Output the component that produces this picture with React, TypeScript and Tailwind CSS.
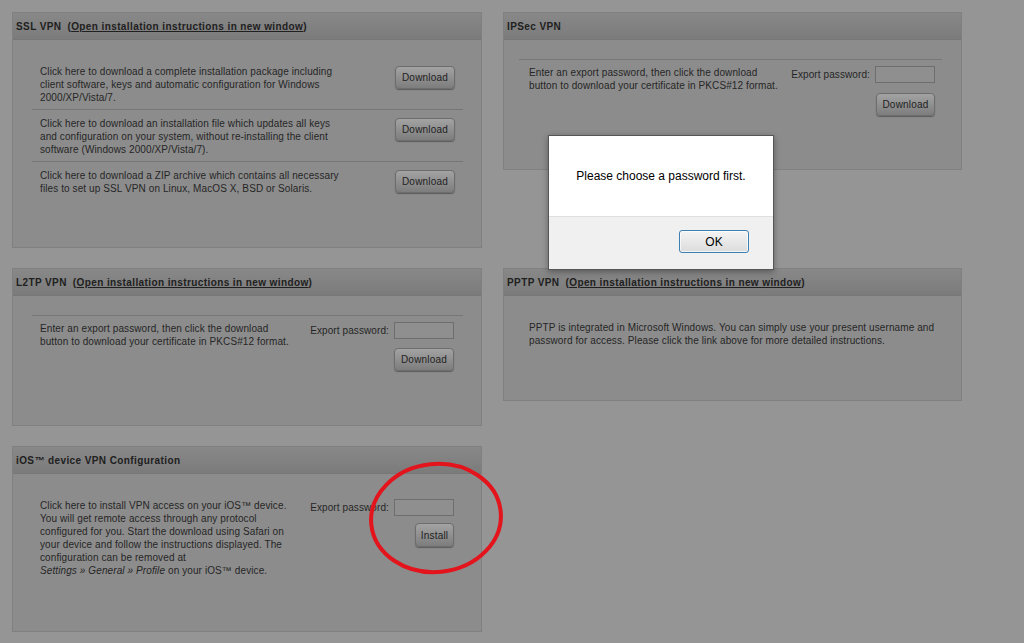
import React from 'react'

const FONT = "font-['Liberation_Sans',Arial,sans-serif]"

function Header({ title, link }: { title: string; link?: boolean }) {
  return (
    <div className="h-[27px] flex items-center pl-[3px] bg-linear-to-b from-[#888888] to-[#7b7b7b] border-b border-[#777777] text-[10px] font-bold text-[#202020] tracking-[0.4px] whitespace-nowrap">
      <span>{title}</span>
      {link && (
        <span className="ml-[6px]">
          (<span className="underline">Open installation instructions in new window</span>)
        </span>
      )}
    </div>
  )
}

function Btn({ label, w }: { label: string; w: string }) {
  return (
    <button
      className={`${w} h-[23px] rounded-[4px] border border-[#6d6d6d] bg-linear-to-b from-[#a3a3a3] to-[#7d7d7d] text-[10px] text-[#222222] shadow-[0_1px_1px_rgba(0,0,0,0.35)] tracking-[0.2px]`}
    >
      {label}
    </button>
  )
}

function Lines({ lines }: { lines: React.ReactNode[] }) {
  return (
    <div className="whitespace-nowrap">
      {lines.map((l, i) => (
        <div key={i} className="h-[13px] leading-[13px]">
          {l}
        </div>
      ))}
    </div>
  )
}

function PasswordField() {
  return (
    <div className="flex items-center gap-[5px]">
      <span>Export password:</span>
      <div className="w-[60px] h-[17px] border border-[#6e6e6e] bg-[#8f8f8f]" />
    </div>
  )
}

const sslRows = [
  [
    'Click here to download a complete installation package including',
    'client software, keys and automatic configuration for Windows',
    '2000/XP/Vista/7.',
  ],
  [
    'Click here to download an installation file which updates all keys',
    'and configuration on your system, without re-installing the client',
    'software (Windows 2000/XP/Vista/7).',
  ],
  [
    'Click here to download a ZIP archive which contains all necessary',
    'files to set up SSL VPN on Linux, MacOS X, BSD or Solaris.',
  ],
]

const certLines = [
  'Enter an export password, then click the download',
  'button to download your certificate in PKCS#12 format.',
]

export default function App() {
  return (
    <div
      className={`${FONT} relative w-[1024px] h-[643px] overflow-hidden bg-[#959595] text-[10px] text-[#262626] tracking-[0.1px] pt-[12px] pl-[12px] flex flex-col gap-[20px]`}
    >
      {/* row 1 */}
      <div className="flex items-start gap-[21px]">
        <div className="w-[470px] h-[236px] border border-[#808080] bg-[#8c8c8c]">
          <Header title="SSL VPN" link />
          <div className="pt-[25px] ml-[19px] mr-[18px]">
            {sslRows.map((row, i) => (
              <div
                key={i}
                className={`flex items-start justify-between pl-[8px] pr-[8px] ${
                  i > 0 ? 'pt-[7px]' : ''
                } ${i < sslRows.length - 1 ? 'pb-[5px] border-b border-[#767676]' : ''}`}
              >
                <Lines lines={row} />
                <div className="pt-[1px]">
                  <Btn label="Download" w="w-[60px]" />
                </div>
              </div>
            ))}
          </div>
        </div>

        <div className="w-[459px] h-[158px] border border-[#808080] bg-[#8c8c8c]">
          <Header title="IPSec VPN" />
          <div className="pt-[19px] ml-[15px] mr-[19px]">
            <div className="border-t border-[#767676] pt-[6px] flex items-start justify-between pl-[10px] pr-[7px]">
              <Lines lines={certLines} />
              <div className="flex flex-col items-end gap-[10px]">
                <PasswordField />
                <Btn label="Download" w="w-[59px]" />
              </div>
            </div>
          </div>
        </div>
      </div>

      {/* row 2 */}
      <div className="flex items-start gap-[21px]">
        <div className="w-[470px] h-[158px] border border-[#808080] bg-[#8c8c8c]">
          <Header title="L2TP VPN" link />
          <div className="pt-[19px] ml-[19px] mr-[18px]">
            <div className="border-t border-[#767676] pt-[6px] flex items-start justify-between pl-[8px] pr-[9px]">
              <Lines lines={certLines} />
              <div className="flex flex-col items-end gap-[9px]">
                <PasswordField />
                <Btn label="Download" w="w-[60px]" />
              </div>
            </div>
          </div>
        </div>

        <div className="w-[459px] h-[133px] border border-[#808080] bg-[#8c8c8c]">
          <Header title="PPTP VPN" link />
          <div className="pt-[25px] pl-[25px]">
            <Lines
              lines={[
                'PPTP is integrated in Microsoft Windows. You can simply use your present username and',
                'password for access. Please click the link above for more detailed instructions.',
              ]}
            />
          </div>
        </div>
      </div>

      {/* row 3 */}
      <div className="flex items-start gap-[21px]">
        <div className="w-[470px] h-[186px] border border-[#808080] bg-[#8c8c8c]">
          <Header title="iOS™ device VPN Configuration" />
          <div className="pt-[25px] pl-[27px] pr-[27px] flex items-start justify-between">
            <Lines
              lines={[
                'Click here to install VPN access on your iOS™ device.',
                'You will get remote access through any protocol',
                'configured for you. Start the download using Safari on',
                'your device and follow the instructions displayed. The',
                'configuration can be removed at',
                <>
                  <i>Settings » General » Profile</i> on your iOS™ device.
                </>,
              ]}
            />
            <div className="flex flex-col items-end gap-[7px]">
              <PasswordField />
              <Btn label="Install" w="w-[39px] h-[24px]" />
            </div>
          </div>
        </div>
      </div>

      {/* alert dialog */}
      <div className="absolute left-[548px] top-[135px] w-[226px] h-[135px] border border-[#555555] bg-white shadow-[0_2px_6px_rgba(0,0,0,0.35)] flex flex-col tracking-normal">
        <div className="h-[80px] flex items-center justify-center text-[12px] text-black">
          Please choose a password first.
        </div>
        <div className="flex-1 bg-[#f0f0f0] border-t border-[#dfdfdf] flex justify-end items-start pt-[13px] pr-[24px]">
          <button className="w-[70px] h-[23px] rounded-[3px] border border-[#3c7fb1] bg-linear-to-b from-[#f4f4f4] to-[#dcdcdc] text-[12px] text-black shadow-[inset_0_0_0_1px_rgba(255,255,255,0.7)]">
            OK
          </button>
        </div>
      </div>

      {/* red annotation */}
      <svg
        className="absolute left-[366px] top-[459px] pointer-events-none"
        width="142"
        height="120"
        viewBox="0 0 142 120"
      >
        <ellipse
          cx="70"
          cy="59"
          rx="65"
          ry="54"
          transform="rotate(-6 70 59)"
          fill="none"
          stroke="#e3141c"
          strokeWidth="4"
        />
      </svg>
    </div>
  )
}
